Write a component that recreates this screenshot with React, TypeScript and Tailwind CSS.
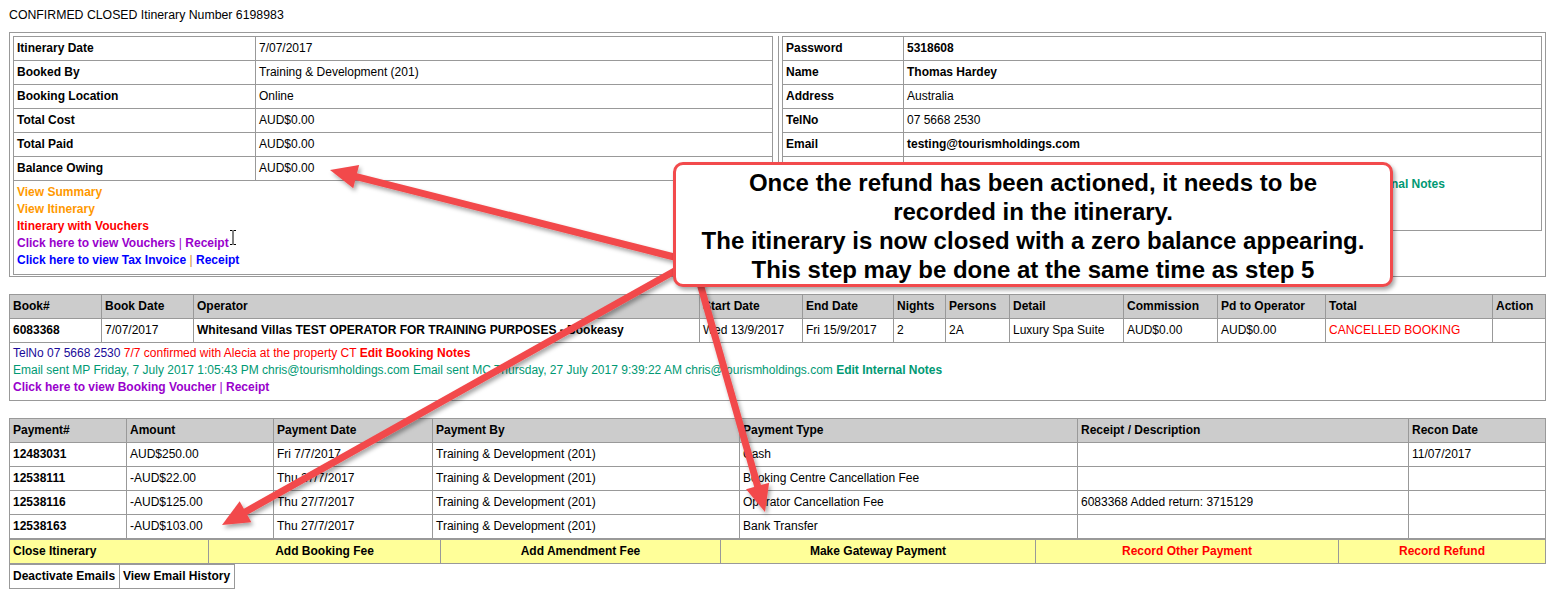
import React from "react";

// --- data ---
const leftRows: [string, string][] = [
  ["Itinerary Date", "7/07/2017"],
  ["Booked By", "Training & Development (201)"],
  ["Booking Location", "Online"],
  ["Total Cost", "AUD$0.00"],
  ["Total Paid", "AUD$0.00"],
  ["Balance Owing", "AUD$0.00"],
];

const rightRows: [string, string, boolean][] = [
  ["Password", "5318608", true],
  ["Name", "Thomas Hardey", true],
  ["Address", "Australia", false],
  ["TelNo", "07 5668 2530", false],
  ["Email", "testing@tourismholdings.com", true],
];

const bookingHead = [
  "Book#",
  "Book Date",
  "Operator",
  "Start Date",
  "End Date",
  "Nights",
  "Persons",
  "Detail",
  "Commission",
  "Pd to Operator",
  "Total",
  "Action",
];

const paymentHead = [
  "Payment#",
  "Amount",
  "Payment Date",
  "Payment By",
  "Payment Type",
  "Receipt / Description",
  "Recon Date",
];

const payments = [
  ["12483031", "AUD$250.00", "Fri 7/7/2017", "Training & Development (201)", "Cash", "", "11/07/2017"],
  ["12538111", "-AUD$22.00", "Thu 27/7/2017", "Training & Development (201)", "Booking Centre Cancellation Fee", "", ""],
  ["12538116", "-AUD$125.00", "Thu 27/7/2017", "Training & Development (201)", "Operator Cancellation Fee", "6083368 Added return: 3715129", ""],
  ["12538163", "-AUD$103.00", "Thu 27/7/2017", "Training & Development (201)", "Bank Transfer", "", ""],
];

const actions: { label: string; red?: boolean; left?: boolean }[] = [
  { label: "Close Itinerary", left: true },
  { label: "Add Booking Fee" },
  { label: "Add Amendment Fee" },
  { label: "Make Gateway Payment" },
  { label: "Record Other Payment", red: true },
  { label: "Record Refund", red: true },
];

// --- helpers ---
function Cell({
  children,
  className = "",
}: {
  children?: React.ReactNode;
  className?: string;
}) {
  return (
    <div
      className={`h-[24px] border-r border-b border-[#999999] px-[3px] pb-[2px] flex items-center whitespace-nowrap overflow-hidden ${className}`}
    >
      {children}
    </div>
  );
}

// arrow geometry for the annotation overlay
function Arrow({ sx, sy, tx, ty }: { sx: number; sy: number; tx: number; ty: number }) {
  const len = Math.hypot(tx - sx, ty - sy);
  const dx = (tx - sx) / len;
  const dy = (ty - sy) / len;
  const L = 27;
  const W = 12;
  const bx = tx - dx * L;
  const by = ty - dy * L;
  const nx = -dy;
  const ny = dx;
  const pts = `${tx},${ty} ${bx + nx * W},${by + ny * W} ${bx - nx * W},${by - ny * W}`;
  return (
    <g filter="url(#arrowShadow)">
      <line x1={sx} y1={sy} x2={bx + dx * 2} y2={by + dy * 2} stroke="#f24a4c" strokeWidth={7} />
      <polygon points={pts} fill="#f24a4c" />
    </g>
  );
}

export default function App() {
  return (
    <div className="relative w-[1552px] h-[594px] overflow-hidden bg-white text-black text-[12px] leading-[14px] font-['Liberation_Sans',Arial,sans-serif]">
      {/* title */}
      <div className="h-[32px] pt-[8px] pl-[9px] text-[12.3px]">CONFIRMED CLOSED Itinerary Number 6198983</div>

      {/* top info section */}
      <div className="ml-[9px] w-[1537px] border border-[#999999] pt-[3px] pb-[1px] px-[3px] flex">
        {/* left panel */}
        <div className="w-[760px] border-l border-t border-[#999999]">
          {leftRows.map(([k, v]) => (
            <div key={k} className="flex">
              <Cell className="w-[242px] font-bold">{k}</Cell>
              <Cell className="w-[517px]">{v}</Cell>
            </div>
          ))}
          <div className="h-[94px] border-r border-b border-[#999999] pl-[3px] pt-[3px] leading-[17px] font-bold">
            <div className="text-[#ff9900]">View Summary</div>
            <div className="text-[#ff9900]">View Itinerary</div>
            <div className="text-[#ff0000]">Itinerary with Vouchers</div>
            <div className="text-[#9900cc] relative">
              Click here to view Vouchers <span className="font-normal">|</span> Receipt
              <svg className="absolute left-[212px] top-[-6px]" width="8" height="17" viewBox="0 0 8 17">
                <path d="M1 1.5h2.5M4.5 1.5H7M4 2v13M1 15.5h2.5M4.5 15.5H7" stroke="#000" strokeWidth="1" fill="none" />
              </svg>
            </div>
            <div className="text-[#0000ff]">
              Click here to view Tax Invoice <span className="font-normal text-[#cc8833]">|</span> Receipt
            </div>
          </div>
        </div>

        {/* right panel */}
        <div className="ml-[5px] border-l border-[#999999] pl-[3px]">
          <div className="w-[760px] border-l border-t border-[#999999]">
            {rightRows.map(([k, v, bold]) => (
              <div key={k} className="flex">
                <Cell className="w-[121px] font-bold">{k}</Cell>
                <Cell className={`w-[638px] ${bold ? "font-bold" : ""}`}>{v}</Cell>
              </div>
            ))}
            <div className="flex">
              <div className="w-[121px] h-[74px] border-r border-b border-[#999999]" />
              <div className="w-[638px] h-[74px] border-r border-b border-[#999999] pl-[35px] pt-[19px] leading-[17px] whitespace-nowrap overflow-hidden">
                <div className="text-[#009973]">
                  Email sent MP Friday, 7 July 2017 1:05:43 PM chris@tourismholdings.com{" "}
                  <span className="font-bold">Edit Internal Notes</span>
                </div>
              </div>
            </div>
          </div>
        </div>
      </div>

      {/* booking table */}
      <div className="mt-[17px] ml-[9px] w-[1537px] border-l border-t border-[#999999]">
        <div className="grid grid-cols-[92px_92px_506px_103px_91px_52px_64px_114px_94px_108px_167px_53px]">
          {bookingHead.map((h) => (
            <Cell key={h} className="bg-[#cccccc] font-bold">
              {h}
            </Cell>
          ))}
          <Cell className="font-bold">6083368</Cell>
          <Cell>7/07/2017</Cell>
          <Cell className="font-bold">Whitesand Villas TEST OPERATOR FOR TRAINING PURPOSES - Bookeasy</Cell>
          <Cell>Wed 13/9/2017</Cell>
          <Cell>Fri 15/9/2017</Cell>
          <Cell>2</Cell>
          <Cell>2A</Cell>
          <Cell>Luxury Spa Suite</Cell>
          <Cell>AUD$0.00</Cell>
          <Cell>AUD$0.00</Cell>
          <Cell className="text-[#ff0000]">CANCELLED BOOKING</Cell>
          <Cell />
        </div>
        <div className="h-[58px] border-r border-b border-[#999999] pl-[3px] pt-[2px] leading-[17px] whitespace-nowrap">
          <div>
            <span className="text-[#1a0a99]">TelNo 07 5668 2530</span>{" "}
            <span className="text-[#ff0000]">7/7 confirmed with Alecia at the property CT</span>{" "}
            <span className="text-[#ff0000] font-bold">Edit Booking Notes</span>
          </div>
          <div className="text-[#009973]">
            Email sent MP Friday, 7 July 2017 1:05:43 PM chris@tourismholdings.com Email sent MC Thursday, 27 July
            2017 9:39:22 AM chris@tourismholdings.com <span className="font-bold">Edit Internal Notes</span>
          </div>
          <div className="text-[#9900cc] font-bold">
            Click here to view Booking Voucher <span className="font-normal">|</span> Receipt
          </div>
        </div>
      </div>

      {/* payments table */}
      <div className="mt-[17px] ml-[9px] w-[1537px] border-l border-t border-[#999999] grid grid-cols-[117px_147px_159px_307px_338px_331px_137px]">
        {paymentHead.map((h) => (
          <Cell key={h} className="bg-[#cccccc] font-bold">
            {h}
          </Cell>
        ))}
        {payments.map((row) =>
          row.map((v, i) => (
            <Cell key={row[0] + i} className={i === 0 ? "font-bold" : ""}>
              {v}
            </Cell>
          )),
        )}
      </div>

      {/* action bar */}
      <div className="ml-[9px] w-[1537px] border-l border-t border-[#999999] bg-[#ffff99] grid grid-cols-[199px_232px_280px_315px_303px_207px]">
        {actions.map((a) => (
          <Cell
            key={a.label}
            className={`font-bold ${a.left ? "" : "justify-center"} ${a.red ? "text-[#ff0000]" : ""}`}
          >
            {a.label}
          </Cell>
        ))}
      </div>

      <div className="ml-[9px] w-[226px] border-l border-t border-[#999999] flex">
        <Cell className="w-[110px] font-bold">Deactivate Emails</Cell>
        <Cell className="w-[115px] font-bold">View Email History</Cell>
      </div>

      {/* annotation arrows */}
      <svg className="absolute left-0 top-0 pointer-events-none" width="1552" height="594" viewBox="0 0 1552 594">
        <defs>
          <filter id="arrowShadow" x="-10%" y="-10%" width="120%" height="120%">
            <feDropShadow dx="2" dy="3" stdDeviation="2" floodColor="#000" floodOpacity="0.35" />
          </filter>
        </defs>
        <Arrow sx={690} sy={261} tx={330} ty={170} />
        <Arrow sx={680} sy={268} tx={222} ty={525} />
        <Arrow sx={699} sy={280} tx={765} ty={512} />
      </svg>

      {/* callout */}
      <div className="absolute left-[673px] top-[162px] w-[720px] h-[125px] bg-white border-[3px] border-[#f24a4c] rounded-[10px] shadow-[2px_3px_4px_rgba(0,0,0,0.35)] pt-[3px] text-center font-bold text-[24px] leading-[29px]">
        <div>Once the refund has been actioned, it needs to be</div>
        <div>recorded in the itinerary.</div>
        <div>The itinerary is now closed with a zero balance appearing.</div>
        <div>This step may be done at the same time as step 5</div>
      </div>
    </div>
  );
}
